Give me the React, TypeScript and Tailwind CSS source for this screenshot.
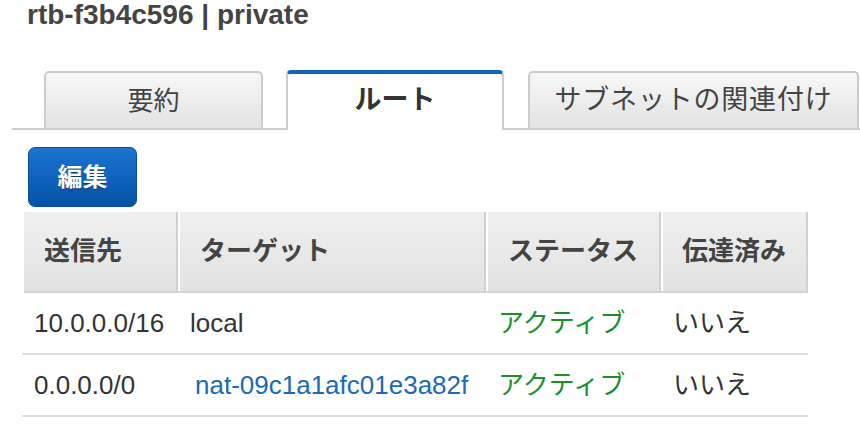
import React from "react";

const FONT = "font-['Liberation_Sans','Noto_Sans_CJK_JP',sans-serif]";

export default function App() {
  return (
    <div className={`w-[860px] h-[428px] bg-white overflow-hidden text-[#444] ${FONT}`}>
      {/* Title */}
      <div className="h-[70px] pl-[27px] pt-[1px]">
        <div className="text-[28px] leading-[28px] font-bold text-[#444]">rtb-f3b4c596 | private</div>
      </div>

      {/* Tabs */}
      <div className="ml-[12px] h-[60px] flex items-end border-b-2 border-[#cccccc]">
        <div className="ml-[32px] w-[219px] h-[57px] flex items-center justify-center rounded-t-[5px] border-2 border-b-0 border-[#cccccc] bg-gradient-to-b from-[#f7f7f7] to-[#e3e3e3] text-[26px] text-[#444] leading-none">
          要約
        </div>
        <div className="ml-[23px] w-[218px] h-[60px] -mb-[2px] flex items-center justify-center rounded-t-[5px] border-x-2 border-t-4 border-x-[#cccccc] border-t-[#1166bb] bg-white text-[27px] font-bold text-[#333] leading-none pb-[4px]">
          ルート
        </div>
        <div className="ml-[24px] w-[331px] h-[57px] flex items-center justify-center rounded-t-[5px] border-2 border-b-0 border-[#cccccc] bg-gradient-to-b from-[#f7f7f7] to-[#e3e3e3] text-[27px] tracking-[0.8px] text-[#444] leading-none">
          サブネットの関連付け
        </div>
      </div>

      {/* Edit button */}
      <div className="pt-[17px] pl-[28px] h-[82px]">
        <div className="w-[109px] h-[60px] rounded-[7px] border border-[#0a4f9e] bg-gradient-to-b from-[#1a74d2] to-[#0552a6] flex items-center justify-center text-white font-bold text-[25px] leading-none [text-shadow:0_1px_1px_rgba(0,0,0,0.45)]">
          編集
        </div>
      </div>

      {/* Table */}
      <div className="ml-[22px] w-[786px]">
        {/* header */}
        <div className="ml-[2px] flex h-[81px] border-b-2 border-[#d4d4d4] bg-gradient-to-b from-[#f0f0f0] to-[#e2e2e2] text-[26px] font-bold text-[#444]">
          <div className="w-[154px] border-r-2 border-[#d0d0d0] flex items-center pl-[20px]">送信先</div>
          <div className="w-[308px] border-l-2 border-l-white border-r-2 border-r-[#d0d0d0] flex items-center pl-[20px]">ターゲット</div>
          <div className="w-[175px] border-l-2 border-l-white border-r-2 border-r-[#d0d0d0] flex items-center pl-[20px]">ステータス</div>
          <div className="w-[147px] border-l-2 border-l-white border-r-2 border-r-[#d0d0d0] flex items-center pl-[19px]">伝達済み</div>
        </div>
        {/* rows */}
        {[
          { dest: "10.0.0.0/16", target: "local", link: false },
          { dest: "0.0.0.0/0", target: "nat-09c1a1afc01e3a82f", link: true },
        ].map((r) => (
          <div key={r.dest} className="flex h-[62px] border-b-2 border-[#dddddd] text-[26px] text-[#333]">
            <div className="w-[156px] flex items-center pl-[12px]">{r.dest}</div>
            <div className="w-[308px] flex items-center pl-[12px]">
              {r.link ? (
                <span className="ml-[5px] text-[#1a6ab8]">{r.target}</span>
              ) : (
                <span>{r.target}</span>
              )}
            </div>
            <div className="w-[175px] flex items-center pl-[12px] text-[#1a8f2c]">アクティブ</div>
            <div className="w-[147px] flex items-center pl-[12px]">いいえ</div>
          </div>
        ))}
      </div>
    </div>
  );
}
